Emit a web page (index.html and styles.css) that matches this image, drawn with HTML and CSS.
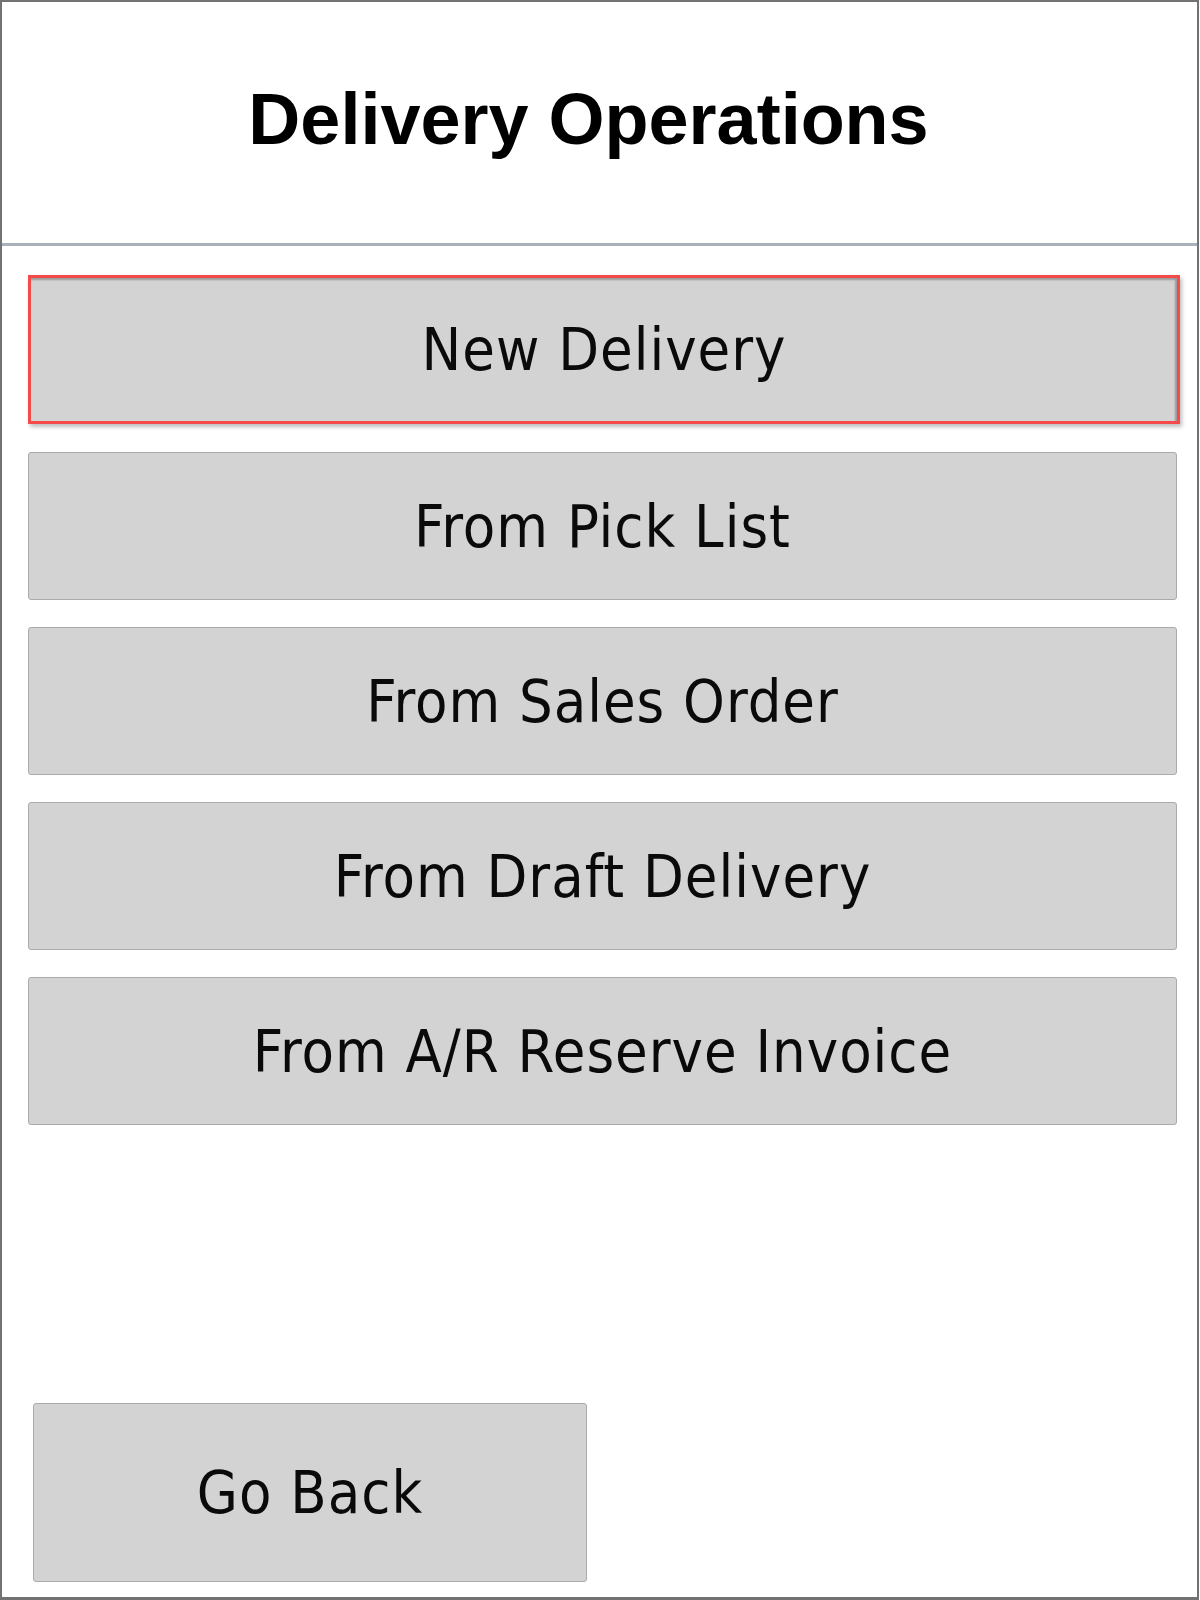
FILE: index.html
```html
<!DOCTYPE html>
<html lang="en">
<head>
<meta charset="utf-8">
<title>Delivery Operations</title>
<link rel="stylesheet" href="styles.css">
</head>
<body>
<div class="screen">
  <header class="header">
    <h1 class="title">Delivery Operations</h1>
  </header>
  <div class="menu">
    <button class="btn btn-focus">New Delivery</button>
    <button class="btn">From Pick List</button>
    <button class="btn">From Sales Order</button>
    <button class="btn">From Draft Delivery</button>
    <button class="btn">From A/R Reserve Invoice</button>
  </div>
  <div class="footer">
    <button class="btn btn-back">Go Back</button>
  </div>
</div>
</body>
</html>
```

FILE: styles.css
```css
html, body {
  margin: 0;
  padding: 0;
  background: #ffffff;
}

.screen {
  box-sizing: border-box;
  width: 1199px;
  height: 1600px;
  border: 2px solid #727272;
  border-bottom-width: 3px;
  display: flex;
  flex-direction: column;
  background: #ffffff;
}

.header {
  box-sizing: border-box;
  height: 244px;
  padding: 77px 22px 0 0;
  border-bottom: 3px solid #a9b2bb;
}

.title {
  margin: 0;
  text-align: center;
  font-family: "Liberation Sans", Arial, sans-serif;
  font-weight: bold;
  font-size: 72px;
  line-height: 80px;
  color: #000000;
}

.menu {
  display: flex;
  flex-direction: column;
  align-items: flex-start;
  gap: 27px;
  padding: 29px 0 0 26px;
}

.btn {
  box-sizing: border-box;
  display: flex;
  align-items: center;
  justify-content: center;
  width: 1149px;
  height: 148px;
  padding: 0;
  margin: 0;
  background: #d3d3d3;
  border: 1px solid #ababab;
  border-radius: 3px;
  font-family: "DejaVu Sans Condensed", "DejaVu Sans", sans-serif;
  font-stretch: semi-condensed;
  font-size: 59px;
  letter-spacing: 1px;
  color: #0a0a0a;
}

.btn-focus {
  width: 1152px;
  height: 149px;
  margin-bottom: 1px;
  border: 3px solid #f44a4a;
  border-radius: 0;
  box-shadow: inset -2px 2px 2px rgba(0, 0, 0, 0.28), 2px 3px 4px rgba(0, 0, 0, 0.25);
}

.footer {
  margin-top: auto;
  padding: 0 0 15px 31px;
}

.btn-back {
  width: 554px;
  height: 179px;
}
```
